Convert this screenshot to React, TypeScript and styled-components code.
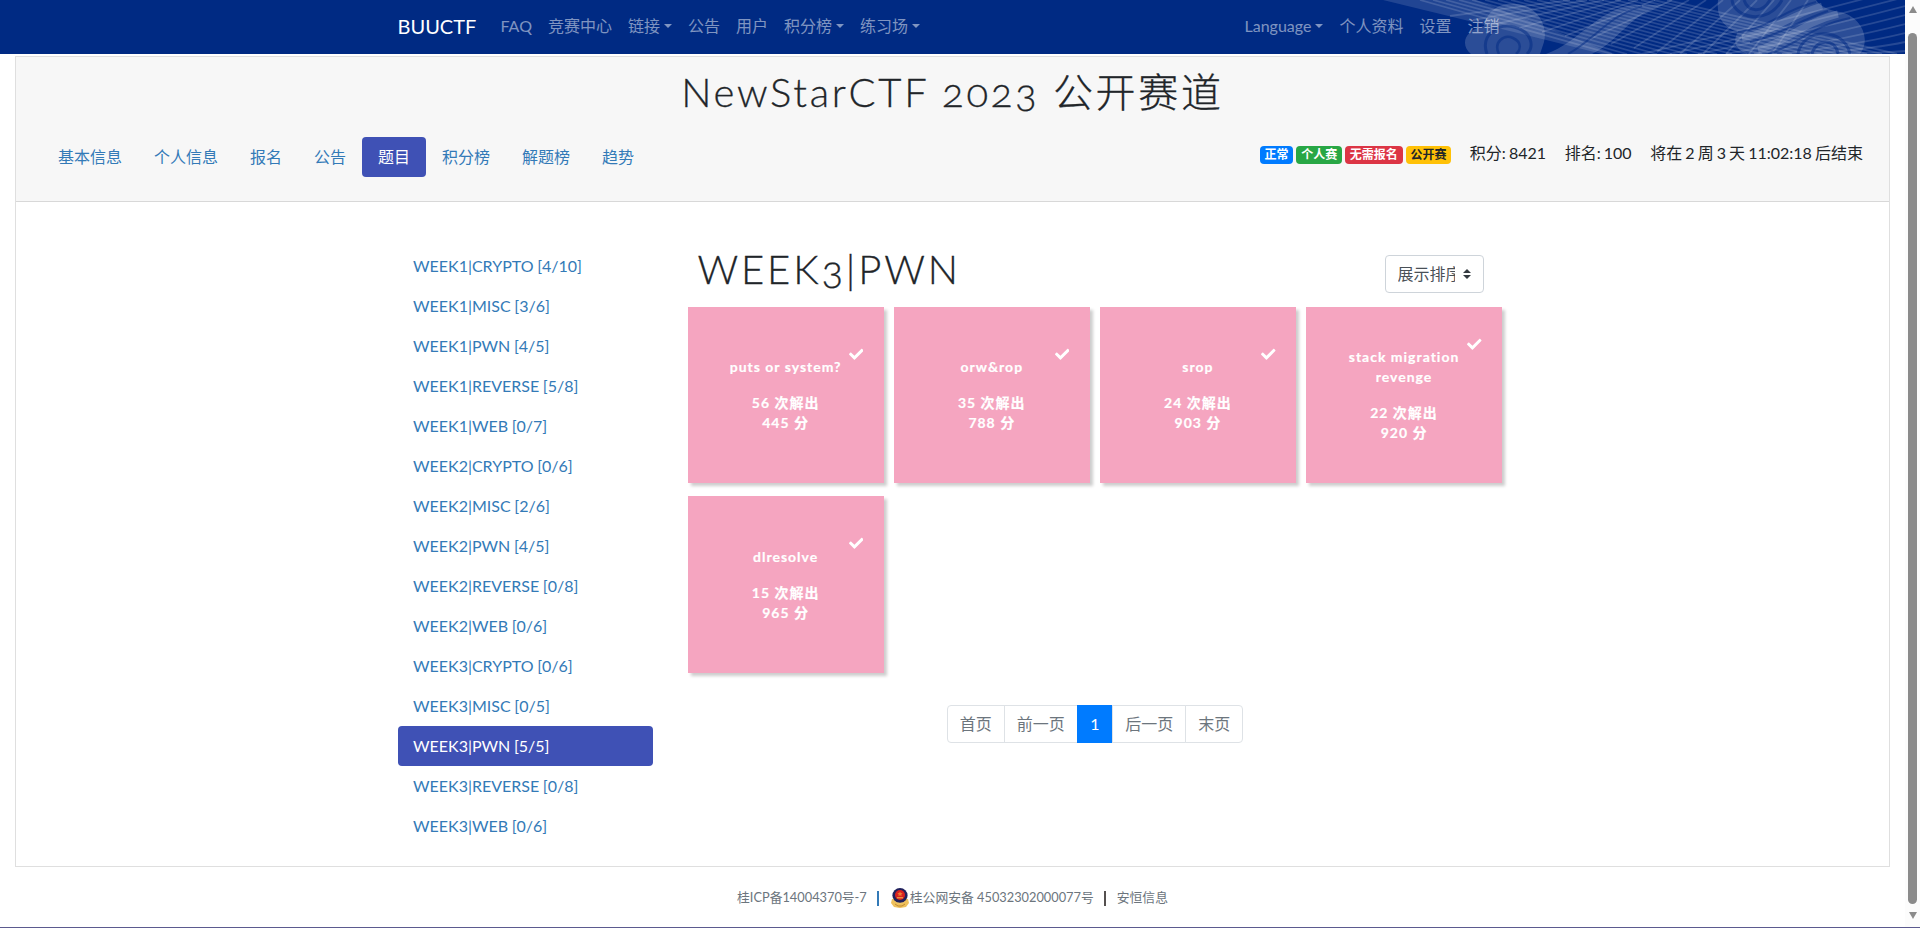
import React from "react";
import styled, { createGlobalStyle, css } from "styled-components";
import { FaCheck } from "react-icons/fa";

const Global = createGlobalStyle`
  *, *::before, *::after { box-sizing: border-box; }
  body {
    margin: 0;
    background: #fff;
    color: #212529;
    font: 400 16px/1.5 Lato, "Noto Sans CJK SC", sans-serif;
  }
  h1, ul, p { margin: 0; padding: 0; }
  ul { list-style: none; }
  a { color: inherit; text-decoration: none; }
`;

const Window = styled.div`
  display: flex;
  height: 928px;
  overflow: hidden;
  border-bottom: 1px solid #5b5a8f;
`;

const Page = styled.div`
  display: flex;
  flex-direction: column;
  width: 1905px;
`;

const Navbar = styled.nav`
  position: relative;
  height: 54px;
  background: #002a83;
  overflow: hidden;
`;

const NavPattern = styled.svg`
  position: absolute;
  top: 0;
  right: 0;
`;

const NavInner = styled.div`
  position: relative;
  display: flex;
  align-items: center;
  width: 1110px;
  height: 52px;
  margin: 0 auto;
`;

const Brand = styled.a`
  width: 95px;
  color: #fff;
  font-size: 20px;
`;

const NavList = styled.ul<{ $end?: boolean }>`
  display: flex;
  margin-left: ${(p) => (p.$end ? "auto" : "0")};
`;

const NavLink = styled.a<{ $menu?: boolean }>`
  display: block;
  padding: 8px;
  color: rgba(255, 255, 255, 0.5);
  ${(p) =>
    p.$menu &&
    css`
      &::after {
        content: "";
        display: inline-block;
        margin-left: 4px;
        vertical-align: 4px;
        border-top: 4.8px solid;
        border-right: 4.8px solid transparent;
        border-left: 4.8px solid transparent;
      }
    `}
`;

const Card = styled.section`
  height: 811px;
  margin: 2px 15px 0;
  border: 1px solid #dfdfdf;
`;

const CardHeader = styled.header`
  height: 145px;
  padding: 11px 20px 0 26px;
  background: #f7f7f7;
  border-bottom: 1px solid #d8d8d8;
`;

const Heading = styled.h1`
  font-family: Lato, "Noto Sans CJK SC", sans-serif;
  font-size: 40px;
  font-weight: 300;
  line-height: 48px;
  letter-spacing: 2.85px;
  font-variant-numeric: oldstyle-nums;
  -webkit-text-stroke: 0.3px currentColor;
`;

const Title = styled(Heading)`
  margin: 0 0 21px -6px;
  letter-spacing: 2.7px;
  text-align: center;
`;

const HeaderRow = styled.div`
  display: flex;
  justify-content: space-between;
`;

const Tabs = styled.ul`
  display: flex;
`;

const pill = css<{ $active?: boolean }>`
  display: block;
  height: 40px;
  padding: 8px 16px;
  border-radius: 4px;
  color: ${(p) => (p.$active ? "#fff" : "#337ab7")};
  background: ${(p) => (p.$active ? "#3f51b5" : "transparent")};
`;

const Tab = styled.a<{ $active?: boolean }>`
  ${pill}
`;

const Status = styled.div`
  display: flex;
  height: 24px;
  margin: 4px 6px 0 0;
  gap: 18.6px;
  word-spacing: -1px;
`;

const Badges = styled.div`
  display: flex;
  align-items: center;
  gap: 3px;
  padding-top: 4px;
`;

const Badge = styled.span<{ $bg: string; $fg?: string }>`
  padding: 3px 4.8px;
  border-radius: 4px;
  background: ${(p) => p.$bg};
  color: ${(p) => p.$fg ?? "#fff"};
  font-size: 12px;
  font-weight: 700;
  line-height: 12px;
`;

const Body = styled.div`
  display: flex;
  width: 1110px;
  margin: 0 auto;
  padding-top: 44px;
`;

const Sidebar = styled.ul`
  width: 255px;
  margin-right: 35px;
`;

const Category = styled.a<{ $active?: boolean }>`
  ${pill}
  padding-left: 15.5px;
  word-spacing: -0.5px;
`;

const Main = styled.main`
  width: 816px;
`;

const MainHead = styled.div`
  display: flex;
  align-items: flex-start;
  justify-content: space-between;
  height: 61px;
  padding: 0 20px 0 10px;
`;

const CategoryHeading = styled(Heading)`
  margin-top: -1px;
`;

const Select = styled.button`
  display: flex;
  align-items: center;
  justify-content: space-between;
  width: 99px;
  height: 38px;
  margin-top: 9px;
  padding: 0 12px;
  border: 1px solid #ced4da;
  border-radius: 4px;
  background: #fff;
  color: #495057;
  font: inherit;
`;

const SelectText = styled.span`
  width: 57px;
  overflow: hidden;
  white-space: nowrap;
`;

const Grid = styled.div`
  display: grid;
  grid-template-columns: repeat(4, 196.25px);
  grid-template-rows: 176px 177px;
  gap: 13px 9.9px;
`;

const Challenge = styled.article`
  display: flex;
  flex-direction: column;
  justify-content: center;
  padding: 0 35px;
  background: #f5a5c0;
  box-shadow: 3px 3px 3px rgba(0, 0, 0, 0.2);
  color: #fff;
  font-size: 14px;
  font-weight: 700;
  line-height: 20px;
  letter-spacing: 1px;
  text-align: center;
  -webkit-text-stroke: 0.2px currentColor;
`;

const Name = styled.p`
  position: relative;
  margin-bottom: 16px;
`;

const Solved = styled(FaCheck)`
  position: absolute;
  top: -10.5px;
  right: -14.5px;
  font-size: 14.5px;
`;

const Pager = styled.ul`
  display: flex;
  justify-content: center;
  margin-top: 32px;
`;

const PageLink = styled.a<{ $active?: boolean }>`
  display: block;
  height: 38px;
  margin-left: -1px;
  padding: 6px ${(p) => (p.$active ? "12.5px" : "12px")};
  border: 1px solid ${(p) => (p.$active ? "#007bff" : "#dee2e6")};
  background: ${(p) => (p.$active ? "#007bff" : "#fff")};
  color: ${(p) => (p.$active ? "#fff" : "#6c757d")};
  li:first-child > & { border-radius: 4px 0 0 4px; }
  li:last-child > & { border-radius: 0 4px 4px 0; }
`;

const Footer = styled.footer`
  display: flex;
  align-items: center;
  justify-content: center;
  height: 20px;
  margin-top: 21px;
  color: #6c757d;
  font-size: 12.8px;
`;

const Divider = styled.i<{ $color: string }>`
  width: 2px;
  height: 15px;
  margin: 0 10.5px;
  background: ${(p) => p.$color};
`;

const Scrollbar = styled.aside`
  display: flex;
  flex-direction: column;
  align-items: center;
  width: 15px;
  padding: 6px 0 8px;
  background: #fcfcfc;
`;

const Thumb = styled.div`
  width: 9px;
  height: 871px;
  margin: 20px 0 8px;
  border-radius: 5px;
  background: #8b8b8b;
`;

const Arrow = styled.i<{ $down?: boolean }>`
  border: 4.5px solid transparent;
  ${(p) =>
    p.$down
      ? "border-top: 7px solid #8b8b8b; border-bottom: 0;"
      : "border-bottom: 7px solid #8b8b8b; border-top: 0;"}
`;

const navLeft: [string, boolean?][] = [
  ["FAQ"], ["竞赛中心"], ["链接", true], ["公告"], ["用户"], ["积分榜", true], ["练习场", true],
];
const navRight: [string, boolean?][] = [["Language", true], ["个人资料"], ["设置"], ["注销"]];
const tabs = ["基本信息", "个人信息", "报名", "公告", "题目", "积分榜", "解题榜", "趋势"];
const categories = [
  "WEEK1|CRYPTO [4/10]", "WEEK1|MISC [3/6]", "WEEK1|PWN [4/5]", "WEEK1|REVERSE [5/8]", "WEEK1|WEB [0/7]",
  "WEEK2|CRYPTO [0/6]", "WEEK2|MISC [2/6]", "WEEK2|PWN [4/5]", "WEEK2|REVERSE [0/8]", "WEEK2|WEB [0/6]",
  "WEEK3|CRYPTO [0/6]", "WEEK3|MISC [0/5]", "WEEK3|PWN [5/5]", "WEEK3|REVERSE [0/8]", "WEEK3|WEB [0/6]",
];
const challenges: [string, number, number][] = [
  ["puts or system?", 56, 445],
  ["orw&rop", 35, 788],
  ["srop", 24, 903],
  ["stack migration revenge", 22, 920],
  ["dlresolve", 15, 965],
];
const pages = ["首页", "前一页", "1", "后一页", "末页"];

function Waves() {
  const n = Array.from({ length: 20 }, (_, i) => i);
  return (
    <NavPattern width="525" height="54" viewBox="0 0 525 54" fill="none" stroke="#fff">
      <path d="M3 0H96L235 54H222Q110 26 3 0Z" fill="#fff" fillOpacity="0.13" stroke="none" />
      <g strokeOpacity="0.15" strokeWidth="1.8">
        {/* rays running down to the right */}
        {n.map((i) => (
          <path key={i} d={`M${40 + i * 13} 0L${232 + i * 15} 54`} />
        ))}
        {/* steeper rays crossing them */}
        {n.slice(0, 15).map((i) => (
          <path key={i} d={`M${190 + i * 17} 0L${70 + i * 23} ${Math.min(54, 16 + i * 4)}`} />
        ))}
        {/* ribbons sweeping up to the right edge */}
        {n.slice(0, 8).map((i) => (
          <path key={i} d={`M${262 + i * 28} 54Q${390 + i * 18} ${24 + i * 4} 525 ${-12 + i * 9}`} />
        ))}
      </g>
      <g fill="#fff" fillOpacity="0.17" stroke="none">
        <path d="M91 54C80 45 84 30 104 26C108 8 122 2 137 4C158 6 168 26 164 42L160 54Z" />
        <path d="M166 54C200 42 214 12 252 5H282C250 14 238 42 212 54Z" />
        <path d="M338 0C336 18 344 28 358 32C352 42 356 50 368 54H480C492 38 480 16 460 12C448 10 440 6 436 0Z" />
      </g>
      <g stroke="#002a83" strokeOpacity="0.5">
        <path d="M107 54C100 35 118 23 134 27C153 32 154 47 147 54" strokeWidth="3" />
        <path d="M119 54C113 42 124 34 133 38C142 42 141 50 136 54" strokeWidth="2.5" />
        <path d="M188 54C214 40 228 16 262 6" strokeWidth="2" />
        <path d="M352 0C354 18 388 26 402 0" strokeWidth="3" />
        <path d="M364 0C368 12 382 14 390 0" strokeWidth="3" />
        <path d="M358 32C386 30 402 10 436 2M370 42C398 36 420 20 448 11M388 54C416 46 430 26 470 18" strokeWidth="2" />
        <path d="M418 54C422 28 464 26 470 54M432 54C436 38 456 38 458 54" strokeWidth="3" />
      </g>
      <g strokeOpacity="0.18" strokeWidth="7">
        <path d="M362 38C388 34 408 16 442 6M378 50C402 44 424 22 458 14" />
      </g>
    </NavPattern>
  );
}

function PoliceBadge() {
  return (
    <svg width="20" height="20" viewBox="0 0 20 20">
      <path d="M2 11L1 15L4 19L10 20L16 19L19 15L18 11Z" fill="#eec05c" />
      <path d="M5 16L8 18H12L15 16" stroke="#c08a32" fill="none" />
      <ellipse cx="10" cy="7.4" rx="7.6" ry="7.4" fill="#20205c" />
      <path d="M2.7 9A7.3 6 0 0 0 17.3 9Q16 15.5 10 15.5T2.7 9" fill="#f2cd7a" />
      <circle cx="10" cy="7" r="5" fill="#d8201f" />
      <path d="M10 3.4l.8 1.6 1.8.2-1.3 1.2.3 1.8-1.6-.9-1.6.9.3-1.8-1.3-1.2 1.8-.2z" fill="#f07a36" />
      <path d="M7 9.8H13" stroke="#f3c04e" />
    </svg>
  );
}

export default function App() {
  return (
    <Window>
      <Global />
      <Page>
        <Navbar>
          <Waves />
          <NavInner>
            <Brand href="#">BUUCTF</Brand>
            <NavList>
              {navLeft.map(([label, menu]) => (
                <li key={label}><NavLink href="#" $menu={menu}>{label}</NavLink></li>
              ))}
            </NavList>
            <NavList $end>
              {navRight.map(([label, menu]) => (
                <li key={label}><NavLink href="#" $menu={menu}>{label}</NavLink></li>
              ))}
            </NavList>
          </NavInner>
        </Navbar>
        <Card>
          <CardHeader>
            <Title>NewStarCTF 2023 公开赛道</Title>
            <HeaderRow>
              <Tabs>
                {tabs.map((t) => (
                  <li key={t}><Tab href="#" $active={t === "题目"}>{t}</Tab></li>
                ))}
              </Tabs>
              <Status>
                <Badges>
                  <Badge $bg="#007bff">正常</Badge>
                  <Badge $bg="#28a745">个人赛</Badge>
                  <Badge $bg="#dc3545">无需报名</Badge>
                  <Badge $bg="#ffc107" $fg="#212529">公开赛</Badge>
                </Badges>
                <span>积分: 8421</span>
                <span>排名: 100</span>
                <span>将在 2 周 3 天 11:02:18 后结束</span>
              </Status>
            </HeaderRow>
          </CardHeader>
          <Body>
            <Sidebar>
              {categories.map((c) => (
                <li key={c}><Category href="#" $active={c.startsWith("WEEK3|PWN")}>{c}</Category></li>
              ))}
            </Sidebar>
            <Main>
              <MainHead>
                <CategoryHeading>WEEK3|PWN</CategoryHeading>
                <Select>
                  <SelectText>展示排序</SelectText>
                  <svg width="8" height="10" viewBox="0 0 4 5"><path fill="#343a40" d="M2 0L0 2h4zm0 5L0 3h4z" /></svg>
                </Select>
              </MainHead>
              <Grid>
                {challenges.map(([name, solves, score]) => (
                  <Challenge key={name}>
                    <Name>{name}<Solved /></Name>
                    <p>{solves} 次解出</p>
                    <p>{score} 分</p>
                  </Challenge>
                ))}
              </Grid>
              <Pager>
                {pages.map((p) => (
                  <li key={p}><PageLink href="#" $active={p === "1"}>{p}</PageLink></li>
                ))}
              </Pager>
            </Main>
          </Body>
        </Card>
        <Footer>
          <a href="#">桂ICP备14004370号-7</a>
          <Divider $color="#337ab7" />
          <PoliceBadge />
          <a href="#">桂公网安备 45032302000077号</a>
          <Divider $color="#55504f" />
          <a href="#">安恒信息</a>
        </Footer>
      </Page>
      <Scrollbar>
        <Arrow />
        <Thumb />
        <Arrow $down />
      </Scrollbar>
    </Window>
  );
}
